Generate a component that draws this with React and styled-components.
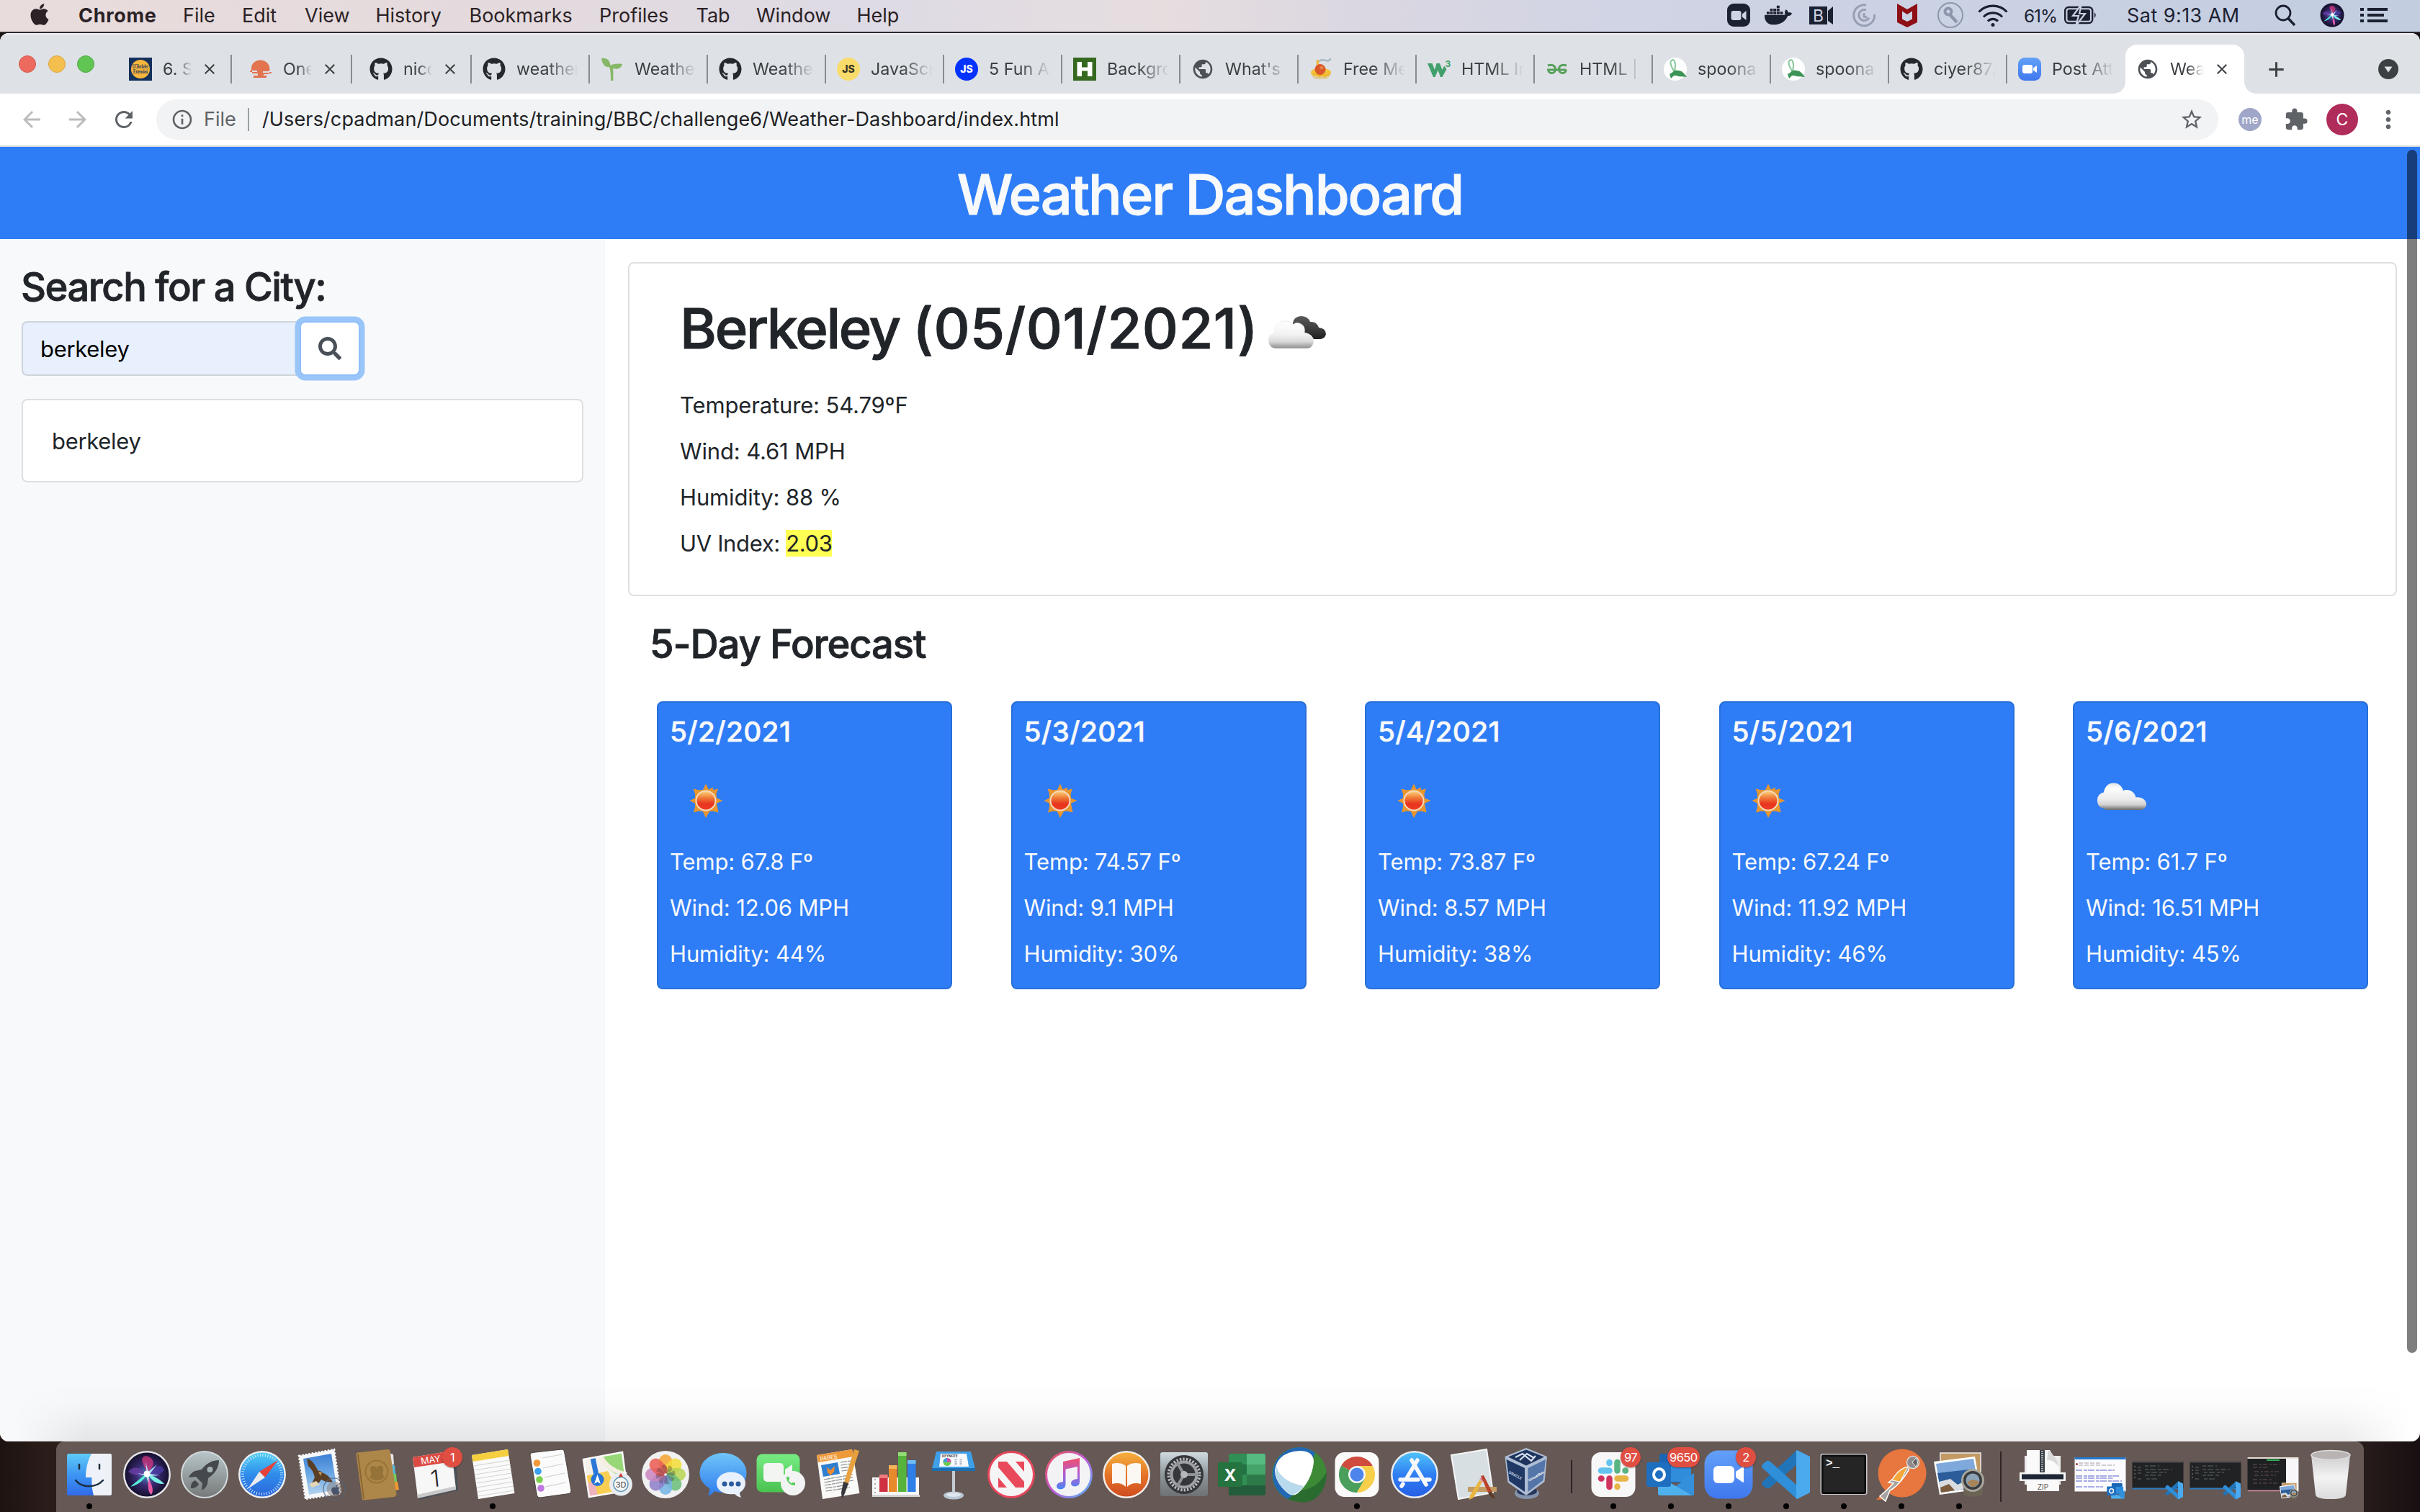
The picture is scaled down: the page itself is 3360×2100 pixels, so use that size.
import React from "react";
import styled, { createGlobalStyle, css } from "styled-components";
import { FaApple, FaGithub, FaDocker, FaSearch } from "react-icons/fa";
import {
  MdExtension,
  MdStarBorder,
  MdInfoOutline,
  MdRefresh,
  MdArrowBack,
  MdArrowForward,
  MdClose,
  MdAdd,
  MdMoreVert,
  MdPublic,
  MdCall,
} from "react-icons/md";

const GlobalStyle = createGlobalStyle`
  * { box-sizing: border-box; }
  body {
    margin: 0;
    overflow: hidden;
    font-family: Inter, Roboto, "Liberation Sans", sans-serif;
    -webkit-font-smoothing: antialiased;
  }
  h1, h2, h3, p { margin: 0; }
`;

/* ---------- Desktop ---------- */

const Desktop = styled.div`
  width: 3360px;
  height: 2100px;
  display: flex;
  flex-direction: column;
  background: linear-gradient(90deg, #1d1311 0%, #2b1d1a 2%, #2b1f1e 97%, #180f10 100%);
`;

/* ---------- Menu bar ---------- */

const MenuBar = styled.header`
  height: 46px;
  flex: none;
  display: flex;
  align-items: center;
  padding: 0 45px 2px 42px;
  border-bottom: 2px solid #2c2830;
  background: linear-gradient(90deg, #e9dcdc 0%, #e4dadd 20%, #dedbe5 36%, #e6dddf 48%, #dbd7e1 56%, #d0d4e5 68%, #c9d1e2 84%, #c2cde0 100%);
  color: #2b2226;
`;

const AppleSlot = styled.span`
  width: 67px;
  display: flex;
  svg { width: 26px; height: 34px; margin-top: -2px; }
`;

const MenuItem = styled.span`
  width: ${(p) => p.$w}px;
  padding-top: 1px;
  font-size: 27px;
  line-height: 42px;
  font-weight: ${(p) => (p.$bold ? 700 : 400)};
  letter-spacing: ${(p) => (p.$bold ? "0.7px" : "0")};
  white-space: nowrap;
`;

const StatusArea = styled.div`
  margin-left: auto;
  display: flex;
  align-items: center;
  color: #1c2132;
`;

const StatusIcon = styled.span`
  display: flex;
  width: ${(p) => p.$w}px;
  margin-left: ${(p) => p.$gap || 0}px;
  svg { display: block; width: ${(p) => p.$w}px; height: 36px; overflow: visible; }
`;

const StatusText = styled.span`
  width: ${(p) => p.$w}px;
  margin-left: ${(p) => p.$gap}px;
  padding-top: 1px;
  font-size: ${(p) => p.$size}px;
  letter-spacing: ${(p) => p.$ls}px;
  line-height: 42px;
  white-space: nowrap;
`;

/* ---------- Browser window ---------- */

const BrowserWindow = styled.main`
  height: 1956px;
  flex: none;
  display: flex;
  flex-direction: column;
  border-radius: 12px;
  overflow: hidden;
  background: #fff;
`;

const TabStrip = styled.div`
  height: 84px;
  flex: none;
  display: flex;
  align-items: flex-end;
  background: #dee1e6;
  border-top: 2px solid #f1f2f4;
`;

const TrafficLights = styled.div`
  width: 155px;
  height: 82px;
  padding: 0 0 0 26px;
  display: flex;
  align-items: center;
  gap: 16.5px;
`;

const Light = styled.span`
  width: 24px;
  height: 24px;
  border-radius: 50%;
  background: ${(p) => p.$color};
  border: 1px solid ${(p) => p.$edge};
`;

const Tab = styled.div`
  position: relative;
  width: ${(p) => p.$w}px;
  height: 68px;
  flex: none;
  display: flex;
  align-items: center;
  padding-left: ${(p) => (p.$closable && !p.$active ? 24 : 15)}px;
  ${(p) =>
    p.$divider &&
    css`
      background: linear-gradient(#888b90, #888b90) right center / 2px 40px no-repeat;
    `}
  ${(p) =>
    p.$active &&
    css`
      background: #fff;
      border-radius: 16px 16px 0 0;
      &::before, &::after {
        content: "";
        position: absolute;
        bottom: 0;
        width: 16px;
        height: 16px;
      }
      &::before {
        left: -16px;
        background: radial-gradient(circle at 0 0, transparent 15.5px, #fff 16px);
      }
      &::after {
        right: -16px;
        background: radial-gradient(circle at 100% 0, transparent 15.5px, #fff 16px);
      }
    `}
`;

const Favicon = styled.span`
  display: flex;
  width: 32px;
  height: 32px;
  flex: none;
  color: ${(p) => p.$color || "#24292e"};
  svg { width: 32px; height: 32px; overflow: visible; }
`;

const TabTitle = styled.span`
  width: ${(p) => p.$w}px;
  margin-left: 15px;
  overflow: hidden;
  white-space: nowrap;
  font-size: 23.3px;
  line-height: 36px;
  color: #3c4043;
  mask-image: linear-gradient(90deg, #000 50%, transparent 100%);
`;

const TabClose = styled.span`
  display: flex;
  margin-left: 13px;
  color: #3c4043;
  svg { width: 24px; height: 24px; }
`;

const NewTab = styled.span`
  display: flex;
  align-items: center;
  height: 68px;
  margin-left: 27px;
  color: #3c4043;
  svg { width: 35px; height: 35px; }
`;

const TabSearch = styled.span`
  display: flex;
  align-items: center;
  height: 68px;
  margin: 0 30px 0 auto;
  svg { width: 28px; height: 28px; }
`;

const Toolbar = styled.div`
  height: 74px;
  flex: none;
  display: flex;
  align-items: center;
  padding: 0 20px 0 26px;
  border-bottom: 2px solid #d9dbde;
  background: #fff;
`;

const NavButton = styled.span`
  display: flex;
  margin-right: ${(p) => p.$mr}px;
  color: ${(p) => (p.$dim ? "#babcbe" : "#5f6368")};
  svg { width: 36px; height: 36px; }
`;

const Omnibox = styled.div`
  width: 2863px;
  height: 56px;
  display: flex;
  align-items: center;
  padding: 0 20px;
  border-radius: 28px;
  background: #f1f3f4;
  font-size: 27px;
  line-height: 40px;
  color: #202124;
`;

const InfoMark = styled.span`
  display: flex;
  color: #5f6368;
  svg { width: 32px; height: 32px; }
`;

const Scheme = styled.span`
  margin-left: 14px;
  width: 61px;
  color: #5f6368;
`;

const OmniRule = styled.span`
  width: 2px;
  height: 32px;
  background: #9aa0a6;
`;

const Url = styled.span`
  margin-left: 18px;
  letter-spacing: 0.13px;
`;

const Star = styled.span`
  display: flex;
  margin-left: auto;
  color: #5f6368;
  svg { width: 34px; height: 34px; }
`;

const RoundBadge = styled.span`
  width: ${(p) => p.$size}px;
  height: ${(p) => p.$size}px;
  margin-left: ${(p) => p.$gap}px;
  border-radius: 50%;
  display: flex;
  align-items: center;
  justify-content: center;
  background: ${(p) => p.$bg};
  color: #fff;
  font-size: ${(p) => p.$font}px;
`;

const ToolIcon = styled.span`
  display: flex;
  margin-left: ${(p) => p.$gap}px;
  color: #5f6368;
  svg { width: ${(p) => p.$size}px; height: ${(p) => p.$size}px; }
`;

/* ---------- Page ---------- */

const Page = styled.div`
  position: relative;
  flex: 1;
  display: flex;
  flex-direction: column;
  color: #212529;
`;

const PageHeader = styled.div`
  height: 128px;
  flex: none;
  display: flex;
  align-items: center;
  justify-content: center;
  padding-top: 4px;
  background: #2e7df6;
`;

const PageTitle = styled.h1`
  font-size: 77.6px;
  line-height: 96px;
  font-weight: 500;
  letter-spacing: -2.12px;
  color: #f8f9fa;
  -webkit-text-stroke: 1px currentColor;
`;

const Columns = styled.div`
  flex: 1;
  display: flex;
`;

const Sidebar = styled.aside`
  width: 840px;
  padding: 32px 30px 0;
  background: #f8f9fb;
`;

const SidebarTitle = styled.h2`
  margin-left: -1px;
  font-size: 54.3px;
  line-height: 68px;
  font-weight: 500;
  letter-spacing: -1.5px;
  -webkit-text-stroke: 0.8px currentColor;
`;

const SearchRow = styled.div`
  display: flex;
  margin-top: 14px;
  height: 76px;
`;

const SearchInput = styled.div`
  width: 386px;
  padding-left: 24px;
  border: 2px solid #ced4da;
  border-right: none;
  border-radius: 8px 0 0 8px;
  background: #e8f0fe;
  color: #000;
  font-size: 31px;
  line-height: 74px;
  letter-spacing: -0.3px;
`;

const SearchButton = styled.span`
  width: 84px;
  height: 76px;
  display: flex;
  align-items: center;
  justify-content: center;
  border: 2px solid #8fbefb;
  border-radius: 8px;
  background: #fff;
  box-shadow: 0 0 0 6.5px #9ac5f9;
  color: #495057;
  svg { width: 32px; height: 32px; }
`;

const HistoryItem = styled.div`
  height: 116px;
  margin-top: 32px;
  padding-left: 40px;
  border: 2px solid #dfdfe0;
  border-radius: 8px;
  background: #fff;
  font-size: 31px;
  line-height: 113px;
  letter-spacing: -0.3px;
`;

const Content = styled.section`
  flex: 1;
  padding: 32px 32px 0;
`;

const CurrentCard = styled.article`
  height: 464px;
  padding: 42px 70px 0;
  border: 2px solid #dfdfdf;
  border-radius: 8px;
`;

const CityRow = styled.div`
  display: flex;
  align-items: center;
  height: 96px;
  margin-bottom: 35px;
`;

const CityName = styled.h2`
  width: 815px;
  font-size: 77.6px;
  line-height: 96px;
  font-weight: 500;
  letter-spacing: -2.3px;
  white-space: nowrap;
  -webkit-text-stroke: 1px currentColor;
`;

const CityDate = styled.span`
  letter-spacing: 0.55px;
`;

const BrokenCloud = styled.svg`
  width: 86px;
  height: 48px;
  margin-top: 9px;
`;

const Stat = styled.p`
  font-size: 31px;
  line-height: 48px;
  margin-bottom: 16px;
  letter-spacing: -0.14px;
`;

const UvLabel = styled.span`
  letter-spacing: -0.35px;
`;

const UvBadge = styled.span`
  display: inline-block;
  line-height: 37px;
  letter-spacing: -0.4px;
  background: #ffff54;
`;

const ForecastTitle = styled.h2`
  margin: 32px 0 46px 30px;
  font-size: 54.3px;
  line-height: 68px;
  font-weight: 500;
  letter-spacing: -1.1px;
  -webkit-text-stroke: 0.8px currentColor;
`;

const ForecastRow = styled.div`
  display: flex;
  justify-content: space-between;
  padding: 0 40px;
`;

const DayCard = styled.article`
  width: 410px;
  height: 400px;
  padding: 16px 16px 0;
  border: 2px solid #286fd9;
  border-radius: 8px;
  background: #2e7df6;
  color: #f8f9fa;
`;

const DayDate = styled.h3`
  font-size: 38.8px;
  line-height: 48px;
  font-weight: 500;
  letter-spacing: 0.35px;
  -webkit-text-stroke: 0.5px currentColor;
`;

const DayIcon = styled.svg`
  display: block;
  width: 100px;
  height: 100px;
  margin: 20px 0 13px 1px;
`;

const ScrollThumb = styled.div`
  position: absolute;
  right: 4px;
  top: 4px;
  width: 14px;
  height: 1671px;
  border-radius: 7px;
  background: rgba(0, 0, 0, 0.5);
`;

const DockShade = styled.div`
  position: absolute;
  left: 20px;
  right: 10px;
  bottom: 0;
  height: 78px;
  background: linear-gradient(180deg, transparent 0%, rgba(0, 0, 0, 0.015) 35%, rgba(0, 0, 0, 0.08) 100%);
  mask-image: linear-gradient(90deg, transparent 0, #000 100px, #000 3230px, transparent 100%);
`;

/* ---------- Dock ---------- */

const Dock = styled.nav`
  width: 3204px;
  height: 98px;
  margin-left: 78px;
  display: flex;
  padding: 6px 6px 0;
  border-radius: 12px 12px 0 0;
  background: #665854;
  box-shadow: inset 0 1px 0 #75696580;
`;

const DockItem = styled.div`
  position: relative;
  width: 80px;
  height: 92px;
  flex: none;
  display: flex;
  flex-direction: column;
  align-items: center;
`;

const DockIcon = styled.svg`
  width: 80px;
  height: 80px;
  overflow: visible;
  font-family: Inter, sans-serif;
`;

const RunningDot = styled.span`
  width: 8px;
  height: 8px;
  border-radius: 50%;
  background: #000;
`;

const Badge = styled.span`
  position: absolute;
  top: 2px;
  left: ${(p) => p.$left}px;
  min-width: 28px;
  height: 28px;
  padding: 0 3px;
  border-radius: 14px;
  background: #e04e42;
  box-shadow: 0 1px 2px rgba(0, 0, 0, 0.35);
  color: #fff;
  font-size: 16.5px;
  line-height: 28px;
  letter-spacing: -0.6px;
  text-align: center;
`;

const DockDivider = styled.span`
  width: 2px;
  height: ${(p) => p.$h}px;
  margin: ${(p) => p.$top}px 17px 0;
  background: #2f2523;
`;

/* ---------- Small drawings ---------- */

const SiriFace = ({ r }) => (
  <>
    <circle cx="40" cy="40" r={r} fill="url(#siri)" />
    <path d="M40 38C36 26 28 17 38 14C50 16 54 26 40 38Z" fill="#d6377f" opacity=".75" />
    <path d="M40 40C30 28 20 28 14 36C22 42 32 42 40 40Z" fill="#6a3fa8" opacity=".8" />
    <path d="M40 40C50 28 60 24 64 34C58 42 48 42 40 40Z" fill="#4a3aa0" opacity=".8" />
    <path d="M41 37C34 44 24 50 17 57C29 54 37 47 41 37Z" fill="#56f0d8" />
    <path d="M40 37C48 43 57 45 64 53C54 54 45 48 40 37Z" fill="#7af2e6" />
    <path d="M41 38C43 50 52 60 46 68C39 62 43 50 41 38Z" fill="#e85aa4" />
    <path d="M40 40L38 22L42 36L54 26L44 39L58 41L43 42L42 52L39 42L26 38Z" fill="#bfefff" opacity=".9" />
    <circle cx="40" cy="39" r="4.5" fill="#fff" />
  </>
);

const Globe = () => <MdPublic />;

const ZoomFavicon = () => (
  <svg viewBox="0 0 32 32">
    <rect width="32" height="32" rx="9" fill="url(#zoomG)" />
    <rect x="6" y="10" width="14" height="12" rx="3" fill="#fff" />
    <path d="M21 14.5L26 11V21L21 17.5Z" fill="#fff" />
  </svg>
);

const BerkeleyFavicon = () => (
  <svg viewBox="0 0 32 32" fontFamily="Liberation Serif, serif" fontSize="7.4" fontWeight="700" textAnchor="middle" fill="#14305c">
    <rect width="32" height="32" fill="#14305c" />
    <circle cx="16" cy="16" r="13" fill="#f6b63c" />
    <text x="16" y="14.5" textLength="22" lengthAdjust="spacingAndGlyphs">UCBerkeley</text>
    <text x="16" y="21.5" textLength="20" lengthAdjust="spacingAndGlyphs">Extension</text>
  </svg>
);

const OneFavicon = () => (
  <svg viewBox="0 0 32 32" fill="#e2744f">
    <path d="M3 17C2 9 8 3.500 15.500 3.500S29 9 28.500 17L27 19H19V21H27V23H20V25H24V28H6V25H12V22H4V20H11V18H3Z" />
    <rect x="28" y="20" width="3" height="2" />
    <rect x="1" y="18" width="3" height="2" />
  </svg>
);

const SproutFavicon = () => (
  <svg viewBox="0 0 32 32" fill="#86b867">
    <path d="M1 1C9 0 13 4 13.500 11C16 9 22 8 30 9C29 15 23 17 17 15C18 20 17 26 17.500 32H14C14 24 14 18 12 13C6 14 2 9 1 1Z" />
  </svg>
);

const JsFavicon = ({ bg, fg }) => (
  <svg viewBox="0 0 32 32">
    <circle cx="16" cy="16" r="16" fill={bg} />
    <text x="16" y="21" fontSize="14" fontWeight="800" textAnchor="middle" fill={fg}>JS</text>
  </svg>
);

const HFavicon = () => (
  <svg viewBox="0 0 32 32">
    <rect width="32" height="32" fill="#34691f" />
    <path d="M5.500 6H12V13.500H20V6H26.500V26H20V18.500H12V26H5.500Z" fill="#fff" />
  </svg>
);

const FoodFavicon = () => (
  <svg viewBox="0 0 32 32">
    <path d="M12 6L17 3L26 4.500L30 1.500" stroke="#a9b9c4" strokeWidth="2.500" fill="none" />
    <path d="M11.500 3V14" stroke="#e9bb45" strokeWidth="3.500" />
    <path d="M2 20H30Q30 27 23 30H9Q2 27 2 20Z" fill="#dccd9c" />
    <ellipse cx="16" cy="20.500" rx="14" ry="6" fill="#f3c23c" />
    <path d="M5 24Q10 20 14 26Q18 21 22 26Q25 22 28 24" stroke="#f0b628" strokeWidth="2.500" fill="none" />
    <circle cx="15" cy="16.500" r="7.500" fill="#d9572b" />
    <circle cx="17" cy="14" r="2.500" fill="#e98248" />
  </svg>
);

const W3Favicon = () => (
  <svg viewBox="0 0 32 32" fill="#41a06c">
    <path d="M0 8H6.500L10 17L12.500 8H17L20.500 17L23 11.500L26.500 16L20.500 27H18L14.500 17.500L10.500 27H8Z" />
    <text x="24.500" y="13" fontSize="12" fontWeight="700">3</text>
  </svg>
);

const GeeksFavicon = () => (
  <svg viewBox="0 0 32 32" fill="none" stroke="#57a05c" strokeWidth="3">
    <path d="M3 11C9 9 14 11 13.500 17C13 23 4 23 3.500 17H28.500M29 11C23 9 18 11 18.500 17C19 23 28 23 28.500 17" />
  </svg>
);

const SpoonFavicon = () => (
  <svg viewBox="0 0 32 32">
    <circle cx="16" cy="16" r="16" fill="#fff" />
    <path d="M11 26C16 18 17 10 15 5C13 1 8 4 10 10C11 15 16 18 15 26" stroke="#8fcaa0" strokeWidth="2.200" fill="none" />
    <path d="M8 23C14 20 15 16 20 18C26 18 28 22 32 27C26 26 20 27 15 24L10 29Z" fill="#3b9455" />
  </svg>
);

const Sun = () => (
  <DayIcon viewBox="0 0 100 100">
    <path
      d="M49 28.500L52.700 36.500L59 33.500L58.800 37.200L66 35.500L63.500 42.500L64 48.500L72.500 52L64 55.800L66.500 68.500L58.800 66.500L54 67L49 76L44.800 67L39 66.500L32 68.500L34 61L34 55.800L26.500 52L34 48.500L34 42.500L31.500 35.500L39 37.300L45 37Z"
      fill="#e8962f"
    />
    <circle cx="49" cy="52" r="13.500" fill="url(#sunG)" stroke="#f7d9bb" strokeWidth="2" />
  </DayIcon>
);

const Cloud = () => (
  <DayIcon viewBox="0 0 100 100">
    <path d="M23 62.500C16 61 15 55 15 51.500C15 45 19 41.500 24 40.500C25 32 31 27.500 37.500 27.500C45 27.500 49 32 51 38C59 35 67 40 68.500 47.500C76 46.500 83 51 83 57C83 61 80 63.500 76 65H27Z" fill="url(#cloudG)" />
  </DayIcon>
);

const VsMark = () => (
  <>
    <path d="M55 6L7 50Q5 53 8 56L13 59Q16 60 19 57L56 25Z" fill="#2274b8" />
    <path d="M55 74L7 31Q5 28 8 25L13 21Q16 20 19 23L56 56Z" fill="#2f8fd8" />
    <path d="M55 6L73 15V65L55 74Q53 73 54 70V10Q53 7 55 6Z" fill="#4ba9ee" />
  </>
);

const OutlookMark = () => (
  <>
    <rect x="24" y="11" width="40" height="40" rx="3" fill="#1a66b5" />
    <rect x="40" y="24" width="28" height="26" fill="#2f8ddb" />
    <path d="M22 42L47 56L72 38V66Q72 69 69 69H25Q22 69 22 66Z" fill="#4fb0ee" />
    <path d="M47 56L72 38V66Q72 69 69 69Z" fill="#3490da" />
    <rect x="6" y="23" width="34" height="34" rx="3" fill="#1f6fc0" />
    <ellipse cx="23.500" cy="40" rx="7.500" ry="8" fill="none" stroke="#fff" strokeWidth="4" />
  </>
);

const PreviewMark = () => (
  <>
    <path d="M14 10H70V60H14Z" fill="#c39a63" stroke="#eee" strokeWidth="1.500" />
    <path d="M5 22L62 15L70 60L13 68Z" fill="#fff" />
    <path d="M8 25L60 18L67 57L15 65Z" fill="#7fa9dc" />
    <path d="M10 38L62 32L67 57L15 65Z" fill="#2c5c99" />
    <path d="M12 50L28 46L38 54L50 48L67 57L15 65Z" fill="#d9dde0" />
    <path d="M14 58L26 53L34 62L15 65Z" fill="#7d5c3d" />
    <path d="M45 48H74L72 68Q59 74 47 68Z" fill="#6b6455" />
    <circle cx="59" cy="48" r="14.500" fill="#3a3b3e" stroke="#a8a69c" strokeWidth="3" />
    <circle cx="59" cy="48" r="9.500" fill="#8ba4b8" />
    <path d="M51 51Q59 44 68 50Q64 58 57 57Z" fill="#a98458" />
  </>
);

const petals = ["#f5a534", "#f3dd3b", "#b9d554", "#6cbf7c", "#76b5e2", "#8f7fca", "#c988c0", "#ea5f55"];

const CodeThumb = () => (
  <>
    <rect x="4.500" y="22" width="71" height="38" fill="#212223" />
    <rect x="4.500" y="58.500" width="71" height="2" fill="#2d7dc4" />
    <rect x="4.500" y="22" width="71" height="2" fill="#3b3c3d" />
    <path d="M8 28V46" stroke="#56585b" strokeWidth="2" strokeDasharray="2 3" />
    <path d="M22 28H42M22 33H60M24 37H52M22 41H46M24 46H40M12 30H18M12 34H17M12 38H18M12 46H17" stroke="#5b6a66" strokeWidth="1" strokeDasharray="5 2 8 3" />
  </>
);

const dockArt = {
  finder: (
    <>
      <rect x="9" y="11" width="62" height="58" rx="2.500" fill="url(#finderG)" />
      <path d="M43 11C38 20 35 32 35 44H43.500C43 53 44 62 46 69H68.500Q71 69 71 66.500V13.500Q71 11 68.500 11Z" fill="#eef2f8" />
      <path d="M26 26V32M54 26V32" stroke="#1c2d3f" strokeWidth="2.500" strokeLinecap="round" />
      <path d="M21 48C30 59 49 59 59 48" stroke="#1c2d3f" strokeWidth="2.500" fill="none" strokeLinecap="round" />
    </>
  ),
  siri: (
    <>
      <circle cx="40" cy="40" r="33" fill="#e6e6ea" />
      <SiriFace r={30.5} />
    </>
  ),
  launchpad: (
    <>
      <circle cx="40" cy="40" r="33" fill="#d3dbdd" />
      <circle cx="40" cy="40" r="31" fill="url(#padG)" />
      <path d="M60 20C50 20 42 25 36 33L27 35C22 37 19 41 18 44L28 43L37 52L36 62C40 60 43 57 44 53L45 45C54 39 60 31 60 20Z" fill="#45484c" />
      <path d="M27 48C21 50 21 56 21 59C25 59 30 58 32 53Z" fill="#45484c" />
      <circle cx="47.500" cy="33" r="4" fill="#a4b1b5" />
    </>
  ),
  safari: (
    <>
      <circle cx="40" cy="40" r="33" fill="#eceef1" />
      <circle cx="40" cy="40" r="30.500" fill="url(#safariG)" />
      <circle cx="40" cy="40" r="27" fill="none" stroke="#cfe9fb" strokeWidth="4" strokeDasharray="1 2.534" />
      <path d="M62 20L44 44L36 36Z" fill="#e5423b" />
      <path d="M20 60L36 36L44 44Z" fill="#e9eaee" />
    </>
  ),
  mail: (
    <>
      <path d="M11 14L60 5L69 66L20 74Z" fill="#f6f7f9" stroke="#f6f7f9" strokeWidth="2.500" strokeDasharray="2.500 2" />
      <path d="M17 18L56 11L64 61L25 68Z" fill="url(#skyG)" />
      <path d="M22 18Q28 19 32 25L38 35Q41 34 43 37Q52 40 58 50Q50 52 42 47L36 55L28 54L33 44Q31 34 24 28Z" fill="#5b3f25" />
      <path d="M25 53L35 49L40 54L29 58Z" fill="#e3d6b8" />
      <path d="M38 36L43 37L41 42Z" fill="#c59a5a" />
      <circle cx="60" cy="60" r="15" fill="none" stroke="#53657b" strokeWidth="1.500" opacity=".7" />
      <circle cx="60" cy="60" r="10.500" fill="#8a8584" opacity=".55" />
      <FaApple x="54" y="53" width="12" height="13" color="#47536a" />
    </>
  ),
  contacts: (
    <>
      <path d="M56 10L62 12L63 26L58 27Z" fill="#e5e7e8" />
      <path d="M58 27H64L65 39L60 40Z" fill="#58b8dc" />
      <path d="M60 39H66L67 50L62 51Z" fill="#74cc5c" />
      <path d="M62 50H68L70 61L64 62Z" fill="#f0992f" />
      <path d="M10.500 12Q10.500 10 12 9.500L54 5Q57 5 57.500 7L66.500 68L64 71L21 75.500Q19 76 18.500 73Z" fill="#ad8649" />
      <path d="M13 12L21 74" stroke="#8b6733" strokeWidth="2" />
      <circle cx="39" cy="36" r="15.500" fill="none" stroke="#977338" strokeWidth="2" />
      <path d="M29 44C33 40 31 38 30 33C30 27 38 26 38.500 32C39 27 48 26 48 32C48 38 46 40 50 44Q40 52 29 44Z" fill="#947238" />
    </>
  ),
  calendar: (
    <>
      <path d="M14 20L69 10L72 62L18 75Z" fill="#4a5157" />
      <path d="M9 16L63 7L69 60L16 72Z" fill="#f7f7f7" />
      <path d="M15 68L69 56V61L16 73Z" fill="#c9c9c9" />
      <path d="M9 16L63 7L65 22L11 30Z" fill="#dc4b43" />
      <text x="34" y="24" fontSize="12.500" textAnchor="middle" fill="#fff" transform="rotate(-9 34 20)">MAY</text>
      <text x="40" y="57" fontSize="32" fontWeight="300" textAnchor="middle" fill="#222" transform="rotate(-6 40 45)">1</text>
    </>
  ),
  notes: (
    <>
      <path d="M11 13L61 5L70.500 66L20 74Z" fill="#fafafa" />
      <path d="M11 13L61 5L62.500 14L12.500 22Z" fill="#f6cf3f" />
      <path d="M13.500 28L64 20M14.500 34L65 26M15.500 40L66 32M16.500 46L66.500 38M17.500 52L67.500 44M18 58L68 50M19 64L69 56M19.500 70L70 62" stroke="#d3d3d1" strokeWidth="1.200" />
    </>
  ),
  reminders: (
    <>
      <path d="M12 13Q12 10 15 9.500L56 5Q59 5 59.500 8L69 62Q69 66 66 66.500L26 72Q22 72 21.500 69Z" fill="#fbfbfb" stroke="#4b4440" strokeWidth="1" />
      <path d="M29 17L56 12M30 31L58 25M31 44L60 38M33 57L62 51" stroke="#d2d2d2" strokeWidth="1.200" />
      <circle cx="21.500" cy="24" r="4.800" fill="#f29a38" />
      <circle cx="23" cy="35.500" r="4.800" fill="#3aa1ef" />
      <circle cx="25" cy="47" r="4.800" fill="#7cd24d" />
      <circle cx="27" cy="59" r="4.800" fill="#c079e0" />
    </>
  ),
  maps: (
    <>
      <path d="M6 19L60 9L67 62L14 71Z" fill="#f4f1ea" />
      <path d="M28 15L60 9L65 45Q40 38 28 15Z" fill="#98d778" />
      <path d="M30 15Q40 34 66 40" stroke="#f5efe2" strokeWidth="6" fill="none" />
      <path d="M9 42L40 35L54 64L14 71Z" fill="#f9cf53" />
      <path d="M11 52L22 50L26 69L14 71Z" fill="#efb3bd" />
      <path d="M19 17L26 50" stroke="#2b78d6" strokeWidth="7" />
      <circle cx="25.500" cy="47" r="9" fill="#2575d8" />
      <path d="M25.500 40L30 53L25.500 50L21 53Z" fill="#fff" />
      <path d="M6 19L60 9L67 62L14 71Z" fill="none" stroke="#fbfbfa" strokeWidth="2.500" />
      <circle cx="58" cy="53.500" r="16" fill="#e8ecf0" />
      <circle cx="58" cy="53.500" r="10" fill="#f8f8f8" stroke="#5f97b5" strokeWidth="1.500" />
      <path d="M58 38L61 43H55Z" fill="#d9342b" />
      <text x="58" y="58" fontSize="11" textAnchor="middle" fill="#444">3D</text>
    </>
  ),
  photos: (
    <>
      <circle cx="40" cy="40" r="33" fill="#f1f1f2" />
      {petals.map((c, i) => (
        <rect key={c} x="31" y="12" width="18" height="28" rx="9" fill={c} opacity=".88" transform={`rotate(${i * 45} 40 40)`} />
      ))}
      {petals.map((c, i) => (
        <path key={c} d="M40 40L34 28Q40 24 42 30Z" fill="#40353c" opacity=".32" transform={`rotate(${i * 45} 40 40)`} />
      ))}
      <circle cx="40" cy="40" r="1.800" fill="#fff" />
    </>
  ),
  messages: (
    <>
      <path d="M40 10C58 10 72.500 22 72.500 38S58 65 40 65C36 65 32 64.500 28 63C26 66 22 69 18.500 69C21 66 22 62 21 59C13 54 7.500 47 7.500 38C7.500 22 22 10 40 10Z" fill="url(#msgG)" />
      <path d="M51 36.500C62 36.500 71 43 71 52C71 57 68 62 63 65C63 67 64 70 65 72C61 71 58 69 56 67C41 69 31 62 31 52C31 43 40 36.500 51 36.500Z" fill="#e9f2fc" />
      <g fill="#2d5c9e"><circle cx="42" cy="53" r="3.500" /><circle cx="51.500" cy="53" r="3.500" /><circle cx="61" cy="53" r="3.500" /></g>
    </>
  ),
  facetime: (
    <>
      <rect x="6.500" y="11.500" width="60" height="53" rx="8" fill="url(#ftG)" />
      <rect x="16" y="24" width="28" height="26" rx="5" fill="#f2f5f2" />
      <path d="M46 33L56 26V40H46Z" fill="#f2f5f2" />
      <circle cx="57" cy="52" r="17" fill="#f2f3f3" />
      <MdCall x="46" y="41" width="22" height="22" color="#53cd57" />
    </>
  ),
  pages: (
    <>
      <path d="M10 13L59 5L69.500 66L18 74Z" fill="#f9f9f8" />
      <path d="M10 13L59 5L61 15L12 23Z" fill="#ee9a38" />
      <text x="15" y="21" fontSize="7.500" fill="#fff" transform="rotate(-9 15 21)">PAGES</text>
      <path d="M16 27L39 23L42 39L19 43Z" fill="#2f7fd0" />
      <path d="M24 30L29 34L35 28L34 36L29 41L25 37Z" fill="#ee8a2d" />
      <path d="M43 23L58 21M43.500 27L58 25M44 31L59 29M44.500 35L59 33M20 47L60 40M20.500 51L60 44M21 55L61 48M22 59L55 54M22.500 63L56 58" stroke="#888" strokeWidth="1.200" strokeDasharray="9 1 5 1" />
      <path d="M62 5L69 7L53 55L47 54Z" fill="#e8a13f" />
      <path d="M47 50L54 52L49 66L45 74L44 65Z" fill="#37383b" />
    </>
  ),
  numbers: (
    <>
      <path d="M7 44H72V68L73 71H7Z" fill="#f7f7f7" />
      <path d="M7 68H73V71H7Z" fill="#d5d5d5" />
      <path d="M11 46V68" stroke="#aaa" strokeWidth="2" strokeDasharray="2 4" />
      <rect x="17" y="40" width="11.500" height="24" fill="#cf3140" /><rect x="17" y="40" width="11.500" height="5" fill="#ef7c7c" />
      <rect x="30" y="27" width="11.500" height="37" fill="#e68a2c" /><rect x="30" y="27" width="11.500" height="5" fill="#f4b45b" />
      <rect x="43" y="9" width="11.500" height="55" fill="#56b33b" /><rect x="43" y="9" width="11.500" height="5" fill="#93dd76" />
      <rect x="56" y="20" width="11.500" height="44" fill="#2f7fe8" /><rect x="56" y="20" width="11.500" height="5" fill="#6fbdf6" />
    </>
  ),
  keynote: (
    <>
      <rect x="38" y="32" width="4" height="36" fill="#c4ccd2" />
      <ellipse cx="40" cy="69" rx="14" ry="5.500" fill="#b9c6d4" />
      <ellipse cx="40" cy="68" rx="10" ry="3" fill="#dfe6ee" />
      <path d="M16 8H64L70 32V35H10V32Z" fill="#3f9fe8" />
      <path d="M10 31H70V35H10Z" fill="#1c6fb0" />
      <path d="M22 11H58L61 29H20Z" fill="#f8f9fb" />
      <text x="24" y="16" fontSize="4.500" fontWeight="700" fill="#444">KEYNOTE</text>
      <circle cx="31" cy="22.500" r="5.500" fill="#6ecb4f" /><path d="M31 22.500V17A5.500 5.500 0 0 1 36.500 22.500Z" fill="#d84bb0" /><path d="M31 22.500H25.500A5.500 5.500 0 0 1 31 17Z" fill="#3ba0e8" />
      <path d="M43 18V27M50 18V27" stroke="#9fb0c4" strokeWidth="3" strokeDasharray="1.500 1.200" />
    </>
  ),
  news: (
    <>
      <circle cx="40" cy="40" r="33" fill="#e8465c" />
      <circle cx="40" cy="40" r="30" fill="#f5f5f6" />
      <path d="M22 22H34L58 50V58H46L22 30ZM46 22H58V36ZM22 44L34 58H22Z" fill="#e9495b" />
    </>
  ),
  music: (
    <>
      <circle cx="40" cy="40" r="33" fill="url(#musicRing)" />
      <circle cx="40" cy="40" r="30" fill="#f3f3f6" />
      <path d="M32 22L55 17V50Q55 56 48 56.500Q43 56 43 52Q43 47 52 46V29L35.500 32.500V54Q35 60 28 60.500Q23 60 23 56Q23 51 32 50Z" fill="url(#noteG)" />
    </>
  ),
  books: (
    <>
      <circle cx="40" cy="40" r="33" fill="#f2ede7" />
      <circle cx="40" cy="40" r="30.500" fill="url(#bookG)" />
      <path d="M39 28Q32 22 20 25V53Q32 50 39 57ZM41 28Q48 22 60 25V53Q48 50 41 57Z" fill="#fbf7f2" />
    </>
  ),
  prefs: (
    <>
      <rect x="7" y="9" width="66" height="61" rx="3" fill="url(#prefG)" />
      <circle cx="40" cy="40" r="27" fill="#35373a" />
      <circle cx="40" cy="40" r="21.500" fill="none" stroke="#b9bcbf" strokeWidth="4" strokeDasharray="2.400 2.100" />
      <circle cx="40" cy="40" r="17.500" fill="none" stroke="#9fa2a5" strokeWidth="4" />
      <path d="M40 40L30 23M40 40L30 57M40 40H58" stroke="#8f9295" strokeWidth="4" />
      <circle cx="40" cy="40" r="5" fill="#b5b8ba" />
    </>
  ),
  excel: (
    <>
      <rect x="22" y="11" width="51" height="58" rx="2.500" fill="#2f8f54" />
      <path d="M47 11H70.500Q73 11 73 13.500V26H47Z" fill="#55bb80" />
      <path d="M22 26H47V40H22Z" fill="#227245" /><path d="M47 26H73V40H47Z" fill="#45a568" />
      <path d="M47 40H73V55H47Z" fill="#2d7a48" />
      <path d="M22 55H73V66.500Q73 69 70.500 69H24.500Q22 69 22 66.500Z" fill="#235c3a" />
      <rect x="7" y="23" width="34" height="34" rx="2.500" fill="#25733f" />
      <text x="24" y="48.500" fontSize="23" fontWeight="700" textAnchor="middle" fill="#fff">X</text>
    </>
  ),
  cisco: (
    <>
      <circle cx="40" cy="40" r="38" fill="#3c8a36" />
      <path d="M40 2A38 38 0 0 0 26 75L50 40L62 10Q52 2 40 2Z" fill="#2268b4" />
      <path d="M78 36Q66 60 40 62L24 74Q60 88 74 58Q78 48 78 36Z" fill="#2a6b30" />
      <path d="M6 34Q10 8 42 7Q60 8 60 22Q58 48 38 66Q30 72 22 64Q6 50 6 34Z" fill="#fff" />
      <path d="M8 28Q14 50 46 56Q40 65 31 68Q24 68 18 60Q4 46 8 28Z" fill="#b9d9ec" />
    </>
  ),
  chrome: (
    <>
      <rect x="9.500" y="9" width="61" height="62" rx="13" fill="#fafafa" />
      <path d="M40 40L18.300 27.500A25 25 0 0 1 61.700 27.500Z" fill="#cf4b3e" />
      <path d="M40 40L18.300 27.500A25 25 0 0 0 40 65L51 46Z" fill="#499f5b" />
      <path d="M40 28H62A25 25 0 0 1 40 65L51 46Z" fill="#f8cf4b" />
      <circle cx="40" cy="40" r="12" fill="#f4f5f6" />
      <circle cx="40" cy="40" r="9.500" fill="#4d85ec" />
    </>
  ),
  appstore: (
    <>
      <circle cx="40" cy="40" r="33" fill="#e9ecf0" />
      <circle cx="40" cy="40" r="30.500" fill="url(#storeG)" />
      <path d="M36 20L56 54M44 20L28 47M20 47H45M55 47H61M24 53L22 56" stroke="#f6f8fb" strokeWidth="5.500" strokeLinecap="round" />
    </>
  ),
  scripts: (
    <>
      <path d="M11 13L60 5L69 65L21 74Z" fill="#d7dfe3" stroke="#f5f6f6" strokeWidth="2" />
      <rect x="34" y="57" width="40" height="7" fill="#c49b63" />
      <path d="M50 48L54 50L42 72L36 75L37 69Z" fill="#e9b43f" />
      <path d="M50 46L53 44L56 47L54 51Z" fill="#e58aa0" />
      <path d="M52 42L56 41L67 63L62 65Z" fill="#b9432d" />
      <path d="M62 65L67 63L72 74Q66 73 62 65Z" fill="#5d3b27" />
    </>
  ),
  virtualbox: (
    <>
      <ellipse cx="36" cy="66" rx="17" ry="8" fill="#8494ad" />
      <ellipse cx="36" cy="63" rx="14" ry="6" fill="#27375c" />
      <path d="M35 3L64 15L60.500 50L35 69L9.500 51L5.500 15Z" fill="#aebdd3" />
      <path d="M35 5.500L60 15.500L35 27.500L10 15.500Z" fill="#1e345d" />
      <path d="M7.500 19L33 31V64L11.500 49Z" fill="#1f3864" />
      <path d="M62 19L37.500 31V64L58.500 48Z" fill="#5475a8" />
      <path d="M20 16L30 11L42 21L48 14M26 20L36 11L46 17" stroke="#d9e2f0" strokeWidth="2.200" fill="none" />
      <text x="10" y="38" fontSize="5" fontWeight="700" fill="#c9d6ea" transform="rotate(27 10 38)">ORACLE</text>
      <text x="39" y="50" fontSize="4.800" fontWeight="700" fill="#fff" transform="rotate(-30 39 50)">VirtualBox</text>
    </>
  ),
  slack: (
    <>
      <rect x="9.500" y="9" width="61" height="62" rx="13" fill="#f8f7f8" />
      <g strokeWidth="8.500" strokeLinecap="round">
        <path d="M34.500 34.500H23" stroke="#62c4ee" /><path d="M34.500 23V24" stroke="#62c4ee" />
        <path d="M45.500 23V34.500" stroke="#58b482" /><path d="M57 34.500H56.500" stroke="#58b482" />
        <path d="M45.500 45.500H57" stroke="#e7b446" /><path d="M45.500 57V56.500" stroke="#e7b446" />
        <path d="M34.500 45.500V57" stroke="#cf345f" /><path d="M23 45.500H23.500" stroke="#cf345f" />
      </g>
    </>
  ),
  outlook: <OutlookMark />,
  zoom: (
    <>
      <rect x="6.500" y="6.500" width="67" height="67" rx="19" fill="url(#zoomG)" />
      <rect x="19" y="28" width="29" height="24" rx="6" fill="#fff" />
      <path d="M50 36L60 29Q61 29 61 31V49Q61 51 60 51L50 44Z" fill="#fff" />
    </>
  ),
  vscode: <VsMark />,
  terminal: (
    <>
      <rect x="7.500" y="11" width="65" height="57" rx="3" fill="#c9cbd0" />
      <rect x="9" y="12.500" width="62" height="54.500" rx="2" fill="#0b0b0b" />
      <rect x="11.500" y="15" width="57" height="49" fill="#252525" />
      <text x="15" y="29" fontFamily="Liberation Mono, monospace" fontWeight="700" fontSize="16" fill="#fff">&gt;_</text>
    </>
  ),
  postman: (
    <>
      <circle cx="41" cy="38" r="33.500" fill="#e8763f" />
      <path d="M5 75L16 64L20 74Z" fill="#e8763f" />
      <path d="M51 29Q38 30 28 46L22 51L29 52Q20 62 10 70L18 77L24 62Q36 56 50 34Z" fill="#a5a29f" stroke="#fff" strokeWidth="1.500" />
      <path d="M49 29Q36 32 27 48L38 50Z" fill="#f4a83c" stroke="#fff" strokeWidth="1" />
      <circle cx="56" cy="23" r="8.500" fill="#8e8c8b" stroke="#dcdad8" strokeWidth="1.500" />
      <path d="M55 23L60 17Q65 23 60 29Z" fill="#656565" stroke="#eee" strokeWidth="1" />
    </>
  ),
  preview: <PreviewMark />,
  zip: (
    <g transform="translate(8 0)">
      <rect x="7" y="14" width="50" height="40" fill="#ececec" />
      <path d="M10 6H42L55 28V63H10Z" fill="#fafafa" />
      <path d="M40 6Q52 16 55 30Q46 18 38 20Z" fill="#d9d9da" />
      <rect x="28" y="6" width="7" height="32" fill="#3a3f45" />
      <path d="M31.500 7V36" stroke="#a9b0b6" strokeWidth="3" strokeDasharray="1.500 1.500" />
      <rect x="0" y="37" width="64" height="12" fill="#f7f7f7" />
      <rect x="3" y="39.500" width="58" height="7" fill="#1d2733" />
      <text x="32.500" y="60.500" fontSize="10" textAnchor="middle" fill="#555">ZIP</text>
    </g>
  ),
  mailThumb: (
    <>
      <rect x="4.500" y="16" width="71" height="47.500" fill="#fbfbfd" />
      <rect x="4.500" y="16" width="71" height="3" fill="#2477cc" />
      <path d="M10 24H40M10 27H60" stroke="#a0a0a8" strokeWidth="1" strokeDasharray="6 2" />
      <path d="M6 34H60M6 42H66M6 45H58M6 49H70M6 57H44" stroke="#8d92dc" strokeWidth="1.300" strokeDasharray="9 2 5 1" />
      <circle cx="7.500" cy="25.500" r="1.500" fill="#a03040" />
      <g transform="translate(47 48) scale(.37)"><OutlookMark /></g>
    </>
  ),
  codeThumb: (
    <>
      <CodeThumb />
      <g transform="translate(48 47) scale(.37)"><VsMark /></g>
    </>
  ),
  previewThumb: (
    <>
      <rect x="4.500" y="16" width="71" height="47.500" fill="#1f2022" />
      <rect x="4.500" y="16" width="71" height="2" fill="#e6ddd9" />
      <rect x="58" y="18" width="17.500" height="45.500" fill="#f8f6f8" />
      <rect x="31" y="19" width="18" height="2" fill="#2fb357" />
      <path d="M12 26H50M12 30H34M14 36H48M14 41H44M12 47H40M12 52H46" stroke="#6b4f52" strokeWidth="1" strokeDasharray="6 3 3 2" />
      <rect x="4.500" y="61.500" width="50" height="2" fill="#c58a9a" />
      <g transform="translate(47 48) scale(.37)"><PreviewMark /></g>
    </>
  ),
  trash: (
    <>
      <path d="M13 13L19 68Q20 74 40 74T61 68L67 13Z" fill="url(#trashG)" />
      <ellipse cx="40" cy="13" rx="27" ry="6.500" fill="#b9b4b3" stroke="#dedede" strokeWidth="1.500" />
    </>
  ),
};

const Gradient = ({ id, stops, x2 = 0 }) => (
  <linearGradient id={id} x1="0" y1="0" x2={x2} y2="1">
    {stops.map((c, i) => (
      <stop key={i} offset={i / (stops.length - 1)} stopColor={c} />
    ))}
  </linearGradient>
);

const GradientSheet = styled.svg`
  position: absolute;
  width: 0;
  height: 0;
`;

const Gradients = () => (
  <GradientSheet>
    <defs>
      <radialGradient id="siri">
        <stop offset="0" stopColor="#4a90c8" />
        <stop offset=".5" stopColor="#3a2a72" />
        <stop offset="1" stopColor="#15102e" />
      </radialGradient>
      <Gradient id="finderG" stops={["#5fcbf9", "#3d96f2", "#2f6bea"]} />
      <Gradient id="padG" stops={["#b7c4c8", "#97a0a2", "#777a79"]} />
      <Gradient id="safariG" stops={["#4fd0f5", "#2f8ceb", "#2b66dc"]} />
      <Gradient id="skyG" stops={["#3c80d4", "#6ca8e4", "#b5d4f0"]} />
      <Gradient id="msgG" stops={["#6fc5f8", "#2f7cf0"]} />
      <Gradient id="ftG" stops={["#77ec83", "#4ac250"]} />
      <Gradient id="musicRing" x2={1} stops={["#f2564e", "#c05ad8", "#48bdf8"]} />
      <Gradient id="noteG" stops={["#f0506a", "#b65ad0", "#4a86f2"]} />
      <Gradient id="bookG" stops={["#f6b03c", "#e5752a", "#cf4c20"]} />
      <Gradient id="prefG" stops={["#cfdbe0", "#8f989c", "#6e7173"]} />
      <Gradient id="storeG" stops={["#4fc2fa", "#2f7ff2", "#265fe6"]} />
      <Gradient id="zoomG" stops={["#62a0f8", "#3f78ee"]} />
      <Gradient id="trashG" stops={["#cfcdcd", "#f3f3f4", "#dcdcdd"]} />
      <Gradient id="sunG" stops={["#fbd884", "#f0803a", "#e8351f", "#ee3b22"]} />
      <Gradient id="cloudG" stops={["#e4e4e4", "#ffffff", "#f3f3f3", "#ececec", "#d2d2d2", "#6a6a6a"]} />
      <Gradient id="whiteCloud" stops={["#fdfdfd", "#fafafa", "#f1f1f1", "#dadada", "#8b8b8b"]} />
      <Gradient id="darkCloud" stops={["#5a5a5a", "#404040", "#1e1e1e"]} />
    </defs>
  </GradientSheet>
);

/* ---------- Data ---------- */

const menus = [
  ["File", 82], ["Edit", 87], ["View", 98.5], ["History", 130], ["Bookmarks", 180.5],
  ["Profiles", 134.5], ["Tab", 83.5], ["Window", 139.5], ["Help", 70],
];

const tabs = [
  { title: "6. S", icon: <BerkeleyFavicon />, closable: true, w: 167 },
  { title: "One", icon: <OneFavicon />, closable: true, w: 167 },
  { title: "nico", icon: <FaGithub />, closable: true, w: 166 },
  { title: "weather", icon: <FaGithub /> },
  { title: "Weather", icon: <SproutFavicon /> },
  { title: "Weather", icon: <FaGithub /> },
  { title: "JavaScri", icon: <JsFavicon bg="#f8dc6b" fg="#3b3620" /> },
  { title: "5 Fun AP", icon: <JsFavicon bg="#0433ff" fg="#fff" /> },
  { title: "Backgro", icon: <HFavicon /> },
  { title: "What's", icon: <Globe />, color: "#4d5156" },
  { title: "Free Me", icon: <FoodFavicon /> },
  { title: "HTML In", icon: <W3Favicon /> },
  { title: "HTML |", icon: <GeeksFavicon /> },
  { title: "spoona", icon: <SpoonFavicon /> },
  { title: "spoona", icon: <SpoonFavicon /> },
  { title: "ciyer87/", icon: <FaGithub /> },
  { title: "Post Att", icon: <ZoomFavicon />, last: true },
];

const days = [
  { date: "5/2/2021", icon: "sun", temp: "67.8", wind: "12.06", humidity: 44 },
  { date: "5/3/2021", icon: "sun", temp: "74.57", wind: "9.1", humidity: 30 },
  { date: "5/4/2021", icon: "sun", temp: "73.87", wind: "8.57", humidity: 38 },
  { date: "5/5/2021", icon: "sun", temp: "67.24", wind: "11.92", humidity: 46 },
  { date: "5/6/2021", icon: "cloud", temp: "61.7", wind: "16.51", humidity: 45 },
];

const dockMain = [
  { art: "finder", on: true }, { art: "siri" }, { art: "launchpad" }, { art: "safari" }, { art: "mail" },
  { art: "contacts" }, { art: "calendar", badge: "1", left: 50 }, { art: "notes", on: true }, { art: "reminders" },
  { art: "maps" }, { art: "photos" }, { art: "messages" }, { art: "facetime" }, { art: "pages" }, { art: "numbers" },
  { art: "keynote" }, { art: "news" }, { art: "music" }, { art: "books" }, { art: "prefs" }, { art: "excel" },
  { art: "cisco" }, { art: "chrome", on: true }, { art: "appstore" }, { art: "scripts" }, { art: "virtualbox" },
];

const dockRunning = [
  { art: "slack", on: true, badge: "97", left: 50 }, { art: "outlook", on: true, badge: "9650", left: 35 },
  { art: "zoom", on: true, badge: "2", left: 50 }, { art: "vscode", on: true }, { art: "terminal", on: true },
  { art: "postman", on: true }, { art: "preview", on: true },
];

const dockFiles = [
  { art: "zip" }, { art: "mailThumb" }, { art: "codeThumb" }, { art: "codeThumb" }, { art: "previewThumb" }, { art: "trash" },
];

const DockGroup = ({ items }) =>
  items.map((it, i) => (
    <DockItem key={i}>
      <DockIcon viewBox="0 0 80 80">{dockArt[it.art]}</DockIcon>
      {it.on && <RunningDot />}
      {it.badge && <Badge $left={it.left}>{it.badge}</Badge>}
    </DockItem>
  ));

const StatusItems = () => (
  <StatusArea>
    <StatusIcon $w={32}>
      <svg viewBox="0 0 32 36">
        <rect y="2" width="32" height="32" rx="9" fill="currentColor" />
        <rect x="5.500" y="12" width="14" height="13" rx="3" fill="#cfd4e4" />
        <path d="M21 16.500L26.500 12V25L21 20.500Z" fill="#cfd4e4" />
      </svg>
    </StatusIcon>
    <StatusIcon $w={38} $gap={20}><FaDocker /></StatusIcon>
    <StatusIcon $w={33} $gap={24}>
      <svg viewBox="0 0 33 36">
        <path d="M0 6H25V31H0ZM26 12L33 6V31L26 26Z" fill="currentColor" />
        <text x="12.500" y="26.500" fontSize="23" textAnchor="middle" fill="#cfd4e4">B</text>
      </svg>
    </StatusIcon>
    <StatusIcon $w={32} $gap={27}>
      <svg viewBox="0 0 32 36" fill="none" stroke="#979fb4" strokeWidth="3">
        <path d="M19 4A14.500 14.500 0 1 0 30.500 21M19 11A7.500 7.500 0 1 0 23 21.500M30.500 17V22M16 15V20L20 21" />
      </svg>
    </StatusIcon>
    <StatusIcon $w={28} $gap={30}>
      <svg viewBox="0 0 28 36">
        <path d="M0 2L14 10L28 2V28L14 35L0 28Z" fill="#8e0f16" />
        <path d="M7 12.500L14 17L21 12.500V23.500L14 27L7 23.500Z" fill="#cbd2e3" />
      </svg>
    </StatusIcon>
    <StatusIcon $w={36} $gap={28}>
      <svg viewBox="0 0 36 36" fill="none" stroke="#8d96ac" strokeWidth="2">
        <circle cx="18" cy="18" r="17" />
        <circle cx="15" cy="13" r="4.500" strokeWidth="4" />
        <path d="M17 17L27 28" strokeWidth="4.500" />
      </svg>
    </StatusIcon>
    <StatusIcon $w={42} $gap={20}>
      <svg viewBox="0 0 42 36" fill="none" stroke="currentColor" strokeWidth="3.200">
        <path d="M1.500 13.500A27 27 0 0 1 40.500 13.500M8 20.500A18 18 0 0 1 34 20.500M14 26.500A9.500 9.500 0 0 1 28 26.500" />
        <circle cx="21" cy="31.500" r="2.500" fill="currentColor" stroke="none" />
      </svg>
    </StatusIcon>
    <StatusText $w={46} $gap={22} $size={24.500} $ls={-1.1}>61%</StatusText>
    <StatusIcon $w={46} $gap={10}>
      <svg viewBox="0 0 46 36">
        <rect x="1.200" y="7" width="38" height="22" rx="5" fill="none" stroke="currentColor" strokeWidth="2.400" />
        <rect x="4.500" y="10.200" width="31.400" height="15.600" rx="2" fill="currentColor" />
        <path d="M24 3L12 19H20L16 33L29 16H21Z" fill="currentColor" stroke="#c9d1e2" strokeWidth="2.200" />
        <path d="M42 14Q45.500 18 42 22Z" fill="currentColor" />
      </svg>
    </StatusIcon>
    <StatusText $w={156} $gap={41} $size={27} $ls={0.45}>Sat 9:13 AM</StatusText>
    <StatusIcon $w={30} $gap={49}>
      <svg viewBox="0 0 30 36" fill="none" stroke="currentColor" strokeWidth="2.800">
        <circle cx="12" cy="15" r="10" /><path d="M19 22.500L28 32" strokeWidth="3.500" />
      </svg>
    </StatusIcon>
    <StatusIcon $w={32} $gap={34}>
      <svg viewBox="9 5 62 70"><circle cx="40" cy="40" r="32" fill="#15102e" /><SiriFace r={30} /></svg>
    </StatusIcon>
    <StatusIcon $w={38} $gap={23}>
      <svg viewBox="0 0 38 36" fill="currentColor">
        <path d="M0 8H5V12H0ZM10 8H38V12H10ZM0 16H5V20H0ZM10 16H33V20H10ZM0 24H5V28H0ZM10 24H38V28H10Z" />
      </svg>
    </StatusIcon>
  </StatusArea>
);

export default function App() {
  return (
    <Desktop>
      <GlobalStyle />
      <Gradients />
      <MenuBar>
        <AppleSlot><FaApple /></AppleSlot>
        <MenuItem $w={145} $bold>Chrome</MenuItem>
        {menus.map(([label, w]) => (
          <MenuItem key={label} $w={w}>{label}</MenuItem>
        ))}
        <StatusItems />
      </MenuBar>

      <BrowserWindow>
        <TabStrip>
          <TrafficLights>
            <Light $color="#ed6a5e" $edge="#d35a50" />
            <Light $color="#f5bf4f" $edge="#d9a43c" />
            <Light $color="#61c554" $edge="#4fa944" />
          </TrafficLights>
          {tabs.map((t, i) => (
            <Tab key={i} $w={t.w || 164} $closable={t.closable} $divider={!t.last}>
              <Favicon $color={t.color}>{t.icon}</Favicon>
              <TabTitle $w={t.closable ? 40 : 86}>{t.title}</TabTitle>
              {t.closable && <TabClose><MdClose /></TabClose>}
            </Tab>
          ))}
          <Tab $w={165} $closable $active>
            <Favicon $color="#4d5156"><Globe /></Favicon>
            <TabTitle $w={47}>Weat</TabTitle>
            <TabClose><MdClose /></TabClose>
          </Tab>
          <NewTab><MdAdd /></NewTab>
          <TabSearch>
            <svg viewBox="0 0 28 28">
              <circle cx="14" cy="14" r="14" fill="#3c4043" />
              <path d="M8.500 10.500H19.500L14 18.500Z" fill="#dee1e6" />
            </svg>
          </TabSearch>
        </TabStrip>

        <Toolbar>
          <NavButton $dim $mr={28}><MdArrowBack /></NavButton>
          <NavButton $dim $mr={28}><MdArrowForward /></NavButton>
          <NavButton $mr={27}><MdRefresh /></NavButton>
          <Omnibox>
            <InfoMark><MdInfoOutline /></InfoMark>
            <Scheme>File</Scheme>
            <OmniRule />
            <Url>/Users/cpadman/Documents/training/BBC/challenge6/Weather-Dashboard/index.html</Url>
            <Star><MdStarBorder /></Star>
          </Omnibox>
          <RoundBadge $size={32} $gap={28} $bg="#9fa6c8" $font={16}>me</RoundBadge>
          <ToolIcon $gap={31} $size={34}><MdExtension /></ToolIcon>
          <RoundBadge $size={44} $gap={25} $bg="#b02c5a" $font={23}>C</RoundBadge>
          <ToolIcon $gap={22} $size={40}><MdMoreVert /></ToolIcon>
        </Toolbar>

        <Page>
          <PageHeader><PageTitle>Weather Dashboard</PageTitle></PageHeader>
          <Columns>
            <Sidebar>
              <SidebarTitle>Search for a City:</SidebarTitle>
              <SearchRow>
                <SearchInput>berkeley</SearchInput>
                <SearchButton><FaSearch /></SearchButton>
              </SearchRow>
              <HistoryItem>berkeley</HistoryItem>
            </Sidebar>
            <Content>
              <CurrentCard>
                <CityRow>
                  <CityName>Berkeley <CityDate>(05/01/2021)</CityDate></CityName>
                  <BrokenCloud viewBox="0 0 86 48">
                    <path d="M36 12Q37 3 47 2Q57 2 60 10Q69 9 72 18Q82 19 82 27Q81 33 74 34H50Z" fill="url(#darkCloud)" />
                    <path d="M11 47Q3 46 2 36Q2 28 11 25Q10 11 23 9Q32 8 36 15Q39 10 45 12Q54 15 52 25Q64 27 65 37Q64 46 57 47Z" fill="url(#whiteCloud)" stroke="#e9e9e9" strokeWidth=".8" />
                  </BrokenCloud>
                </CityRow>
                <Stat>Temperature: 54.79ºF</Stat>
                <Stat>Wind: 4.61 MPH</Stat>
                <Stat>Humidity: 88 %</Stat>
                <Stat><UvLabel>UV Index: </UvLabel><UvBadge>2.03</UvBadge></Stat>
              </CurrentCard>
              <ForecastTitle>5-Day Forecast</ForecastTitle>
              <ForecastRow>
                {days.map((d) => (
                  <DayCard key={d.date}>
                    <DayDate>{d.date}</DayDate>
                    {d.icon === "sun" ? <Sun /> : <Cloud />}
                    <Stat>Temp: {d.temp} Fº</Stat>
                    <Stat>Wind: {d.wind} MPH</Stat>
                    <Stat>Humidity: {d.humidity}%</Stat>
                  </DayCard>
                ))}
              </ForecastRow>
            </Content>
          </Columns>
          <ScrollThumb />
          <DockShade />
        </Page>
      </BrowserWindow>

      <Dock>
        <DockGroup items={dockMain} />
        <DockDivider $h={46} $top={20} />
        <DockGroup items={dockRunning} />
        <DockDivider $h={70} $top={8} />
        <DockGroup items={dockFiles} />
      </Dock>
    </Desktop>
  );
}
